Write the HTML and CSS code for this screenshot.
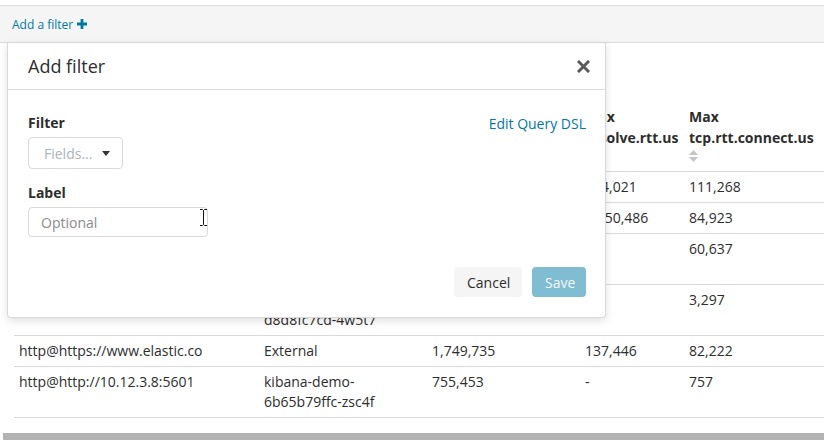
FILE: index.html
```html
<!DOCTYPE html>
<html>
<head>
<meta charset="utf-8">
<link rel="stylesheet" href="styles.css">
</head>
<body>
<div class="page">
  <div class="filterbar">
    <a class="add-filter">Add a filter <svg class="plus" width="10" height="10" viewBox="0 0 10 10"><path d="M3.6 0h2.8v3.6H10v2.8H6.4V10H3.6V6.4H0V3.6h3.6z" fill="#0079a5"/></svg></a>
  </div>

  <div class="content">
    <table class="data">
      <colgroup>
        <col class="c1"><col class="c2"><col class="c3"><col class="c4"><col class="c5">
      </colgroup>
      <thead>
        <tr>
          <th>Monitor</th>
          <th>Host</th>
          <th>Max duration.us</th>
          <th>Max resolve.rtt.us</th>
          <th>Max tcp.rtt.connect.us<span class="sort"><svg width="9" height="12" viewBox="0 0 9 12"><path d="M4.5 0L9 5H0z M0 7h9l-4.5 5z" fill="#c4c4c4"/></svg></span></th>
        </tr>
      </thead>
      <tbody>
        <tr><td>http@http://localhost:5601</td><td>kibana-demo</td><td>2,318,221</td><td>164,021</td><td>111,268</td></tr>
        <tr><td>http@http://localhost:9200</td><td>elastic-demo</td><td>1,984,530</td><td>1,150,486</td><td>84,923</td></tr>
        <tr><td>http@http://10.12.3.4:9200</td><td>kibana-demo-7f4c6d9b8c-xk2pq</td><td>965,102</td><td>-</td><td>60,637</td></tr>
        <tr><td>http@http://10.12.3.9:5601</td><td>kibana-demo-d8d8fc7cd-4w5t7</td><td>880,317</td><td>-</td><td>3,297</td></tr>
        <tr><td>http@https://www.elastic.co</td><td>External</td><td>1,749,735</td><td>137,446</td><td>82,222</td></tr>
        <tr><td>http@http://10.12.3.8:5601</td><td>kibana-demo-6b65b79ffc-zsc4f</td><td>755,453</td><td>-</td><td>757</td></tr>
      </tbody>
    </table>
  </div>

  <div class="scrollbar"></div>

  <div class="modal">
    <div class="modal-header">
      <h2 class="modal-title">Add filter</h2>
      <svg class="close" width="13" height="13" viewBox="0 0 13 13"><path d="M2 2L11 11M11 2L2 11" stroke="#5a5a5a" stroke-width="3" stroke-linecap="square"/></svg>
    </div>
    <div class="modal-body">
      <div class="row-label">
        <span class="label">Filter</span>
        <a class="dsl">Edit Query DSL</a>
      </div>
      <div class="select">
        <span class="select-ph">Fields...</span>
        <svg width="8" height="5" viewBox="0 0 8 5"><path d="M0 0h8L4 5z" fill="#333"/></svg>
      </div>
      <div class="label label2">Label</div>
      <div class="input-wrap">
        <div class="input"><span class="input-ph">Optional</span></div>
        <svg class="ibeam" width="7" height="17" viewBox="0 0 7 17"><path d="M0 0.5h2.5l1 1 1-1H7M3.5 1.5v14M0 16.5h2.5l1-1 1 1H7" stroke="#111" stroke-width="1" fill="none"/></svg>
      </div>
    </div>
    <div class="modal-footer">
      <button class="btn cancel">Cancel</button>
      <button class="btn save">Save</button>
    </div>
  </div>
</div>
</body>
</html>
```

FILE: styles.css
```css
html, body {
  margin: 0;
  padding: 0;
  background: #fff;
  overflow: hidden;
}
body {
  font-family: "Open Sans", "Liberation Sans", sans-serif;
  font-size: 14px;
  color: #2d2d2d;
  width: 824px;
  height: 440px;
}
.page {
  position: relative;
  padding-top: 5px;
  height: 435px;
}
.filterbar {
  height: 36px;
  background: #f5f5f5;
  border-top: 1px solid #d9d9d9;
  border-bottom: 1px solid #d9d9d9;
  display: flex;
  align-items: center;
  padding-left: 12px;
}
.add-filter {
  font-size: 12px;
  color: #0079a5;
  display: flex;
  align-items: center;
  gap: 4px;
}
.plus { display: block; }

.content {
  padding-left: 14px;
  padding-top: 53px;
}
.data {
  border-collapse: collapse;
  table-layout: fixed;
  width: 810px;
}
.c1 { width: 245px; }
.c2 { width: 168px; }
.c3 { width: 153px; }
.c4 { width: 104px; }
.c5 { width: 140px; }
.data th {
  text-align: left;
  font-weight: 700;
  line-height: 21px;
  padding: 10px 5px 2px 5px;
  vertical-align: top;
  border-bottom: 1px solid #d9d9d9;
}
.sort {
  display: block;
  height: 21px;
  padding-top: 2px;
  box-sizing: border-box;
}
.sort svg { display: block; }
.data td {
  line-height: 20px;
  padding: 5px 5px;
  vertical-align: top;
  border-bottom: 1px solid #d9d9d9;
}
.scrollbar {
  height: 7px;
  background: #b3b3b3;
  margin: 15px 0 0 3px;
}

.modal {
  position: absolute;
  left: 7px;
  top: 43px;
  width: 597px;
  height: 274px;
  background: #fff;
  border: 1px solid #d9d9d9;
  border-top: none;
  border-radius: 0 0 4px 4px;
  box-shadow: 0 3px 8px rgba(0, 0, 0, 0.12);
  display: flex;
  flex-direction: column;
}
.modal-header {
  height: 46px;
  border-bottom: 1px solid #d9d9d9;
  display: flex;
  align-items: center;
  justify-content: space-between;
  padding: 0 15px 0 20px;
  flex: none;
}
.modal-title {
  margin: 0;
  font-size: 18px;
  font-weight: 400;
  color: #2d2d2d;
}
.close { display: block; }
.modal-body {
  padding: 23px 19px 0 20px;
  flex: 1;
}
.row-label {
  display: flex;
  justify-content: space-between;
  align-items: center;
  height: 20px;
  margin-bottom: 4px;
}
.label {
  font-weight: 700;
  line-height: 20px;
}
.dsl {
  color: #0079a5;
}
.select {
  width: 95px;
  height: 32px;
  border: 1px solid #d9d9d9;
  border-radius: 4px;
  display: flex;
  align-items: center;
  justify-content: space-between;
  padding: 0 12px 0 15px;
  box-sizing: border-box;
}
.select-ph { color: #aab3bb; }
.select svg { display: block; }
.label2 {
  margin-top: 14px;
  margin-bottom: 4px;
}
.input-wrap {
  position: relative;
  width: 180px;
}
.input {
  width: 180px;
  height: 30px;
  box-sizing: border-box;
  border: 1px solid #d9d9d9;
  border-radius: 4px;
  display: flex;
  align-items: center;
  padding-left: 12px;
}
.input-ph { color: #8a8a8a; }
.ibeam {
  position: absolute;
  left: 172px;
  top: 2px;
}
.modal-footer {
  display: flex;
  justify-content: flex-end;
  gap: 10px;
  padding: 0 19px 20px 20px;
  flex: none;
}
.btn {
  font-family: "Open Sans", "Liberation Sans", sans-serif;
  font-size: 14px;
  height: 30px;
  border: none;
  border-radius: 4px;
  padding: 0 13px;
}
.cancel {
  background: #f5f5f5;
  color: #2d2d2d;
  width: 68px;
}
.save {
  background: #80bcd2;
  color: #f4f9fb;
  width: 54px;
}
```
